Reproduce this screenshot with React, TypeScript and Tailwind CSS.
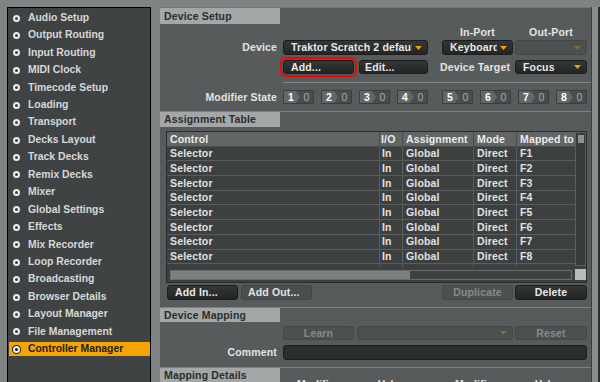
import React from "react";

const sideItems = [
  "Audio Setup",
  "Output Routing",
  "Input Routing",
  "MIDI Clock",
  "Timecode Setup",
  "Loading",
  "Transport",
  "Decks Layout",
  "Track Decks",
  "Remix Decks",
  "Mixer",
  "Global Settings",
  "Effects",
  "Mix Recorder",
  "Loop Recorder",
  "Broadcasting",
  "Browser Details",
  "Layout Manager",
  "File Management",
  "Controller Manager",
];

const rows = ["F1", "F2", "F3", "F4", "F5", "F6", "F7", "F8", "F9"];

function Arrow({ dim }: { dim?: boolean }) {
  return (
    <svg width="7" height="4" viewBox="0 0 7 4" className="shrink-0">
      <polygon points="0,0 7,0 3.5,4" fill={dim ? "#8a6a38" : "#f59e00"} />
    </svg>
  );
}

function Drop({ text, className, disabled }: { text?: string; className: string; disabled?: boolean }) {
  return (
    <div
      className={`${className} h-full flex items-center rounded-[3px] border pl-[7px] pr-[5px] ${
        disabled
          ? "border-[#444747] bg-[#4d5050]"
          : "border-[#1b1c1c] bg-linear-to-b from-[#353636] to-[#242525] text-[#e8e8e8]"
      }`}
    >
      <span className="flex-1 min-w-0 mr-[3px] overflow-hidden whitespace-nowrap">{text}</span>
      <Arrow dim={disabled} />
    </div>
  );
}

function Btn({
  text,
  className,
  kind,
}: {
  text: string;
  className: string;
  kind: "dark" | "mid" | "off";
}) {
  const k =
    kind === "dark"
      ? "border-[#1b1c1c] bg-linear-to-b from-[#353636] to-[#232424] text-[#e8e8e8]"
      : kind === "mid"
      ? "border-[#424545] bg-[#4b4e4e] text-[#e2e2e2]"
      : "border-[#454848] bg-[#4d5050] text-[#868a8a] justify-center";
  return (
    <div className={`${className} h-full flex items-center whitespace-nowrap rounded-[3px] border ${k}`}>
      {text}
    </div>
  );
}

function Header({ text, className }: { text: string; className: string }) {
  return (
    <div className={`${className} w-[120px] bg-[#a3a7a7] text-[#2b2d2d] pl-[4px] flex items-center whitespace-nowrap`}>
      {text}
    </div>
  );
}

function Mod({ n }: { n: number }) {
  return (
    <div className="w-[31px] h-full flex bg-[#4a4d4d] border border-[#3b3e3e] rounded-[1px] overflow-hidden">
      <div className="w-[12px] bg-[#646767] flex items-center justify-end pr-[2px] text-white">{n}</div>
      <div className="w-0 h-0 border-y-[6px] border-y-transparent border-l-[4px] border-l-[#646767]" />
      <div className="flex-1 flex items-center justify-center text-[#a7aaaa] font-normal">0</div>
    </div>
  );
}

export default function App() {
  return (
    <div className="w-[600px] h-[382px] overflow-hidden bg-[#808383] flex pt-[7px] pl-[7px] font-['Liberation_Sans',Arial,Helvetica,sans-serif] font-bold text-[10.5px] leading-none">
      {/* Sidebar */}
      <div className="w-[144px] h-[400px] shrink-0 bg-[#404343] border border-black pt-[1.3px]">
        {sideItems.map((it) => {
          const active = it === "Controller Manager";
          return (
            <div key={it} className="h-[17.45px] flex items-center">
              <div
                className={`flex items-center h-[14px] w-full ml-[1px] ${
                  active ? "bg-[#f6a400] text-[#1c1c1c]" : "text-[#d6d8d8]"
                }`}
              >
                <span
                  className={`ml-[4px] w-[7px] h-[7px] rounded-full border-2 border-[#ececec] ${
                    active ? "bg-[#222] ring-1 ring-[#222]" : "bg-[#404343]"
                  }`}
                />
                <span className="ml-[8px] text-[10.4px] whitespace-nowrap">{it}</span>
              </div>
            </div>
          );
        })}
      </div>

      <div className="w-[9px] shrink-0" />

      {/* Main panel */}
      <div className="w-[432px] h-[400px] shrink-0 bg-[#585b5b] flex flex-col border-r border-[#3c3e3e] tracking-[0.15px]">
        {/* Device Setup */}
        <div className="border-t border-[#737676]">
          <Header text="Device Setup" className="h-[16px]" />
          <div className="flex h-[16px] items-center text-[#e4e4e4]">
            <div className="w-[282px]" />
            <div className="w-[71px] text-center">In-Port</div>
            <div className="w-[72px] ml-[2px] text-center">Out-Port</div>
          </div>
          <div className="flex h-[15px] items-center">
            <div className="w-[117px] text-right text-[#e4e4e4]">Device</div>
            <div className="ml-[6px] h-full flex">
              <Drop text="Traktor Scratch 2 default" className="w-[145px]" />
            </div>
            <div className="ml-[14px] h-full flex">
              <Drop text="Keyboard" className="w-[71px]" />
            </div>
            <div className="ml-[2px] h-full flex">
              <Drop className="w-[72px]" disabled />
            </div>
          </div>
          <div className="flex h-[14px] mt-[5px] items-center">
            <div className="w-[117px]" />
            <div className="ml-[6px] h-full flex rounded-[3px] outline-2 outline-offset-1 outline-[#ff0000]">
              <Btn text="Add..." className="w-[71px] pl-[7px]" kind="dark" />
            </div>
            <div className="ml-[5px] h-full flex">
              <Btn text="Edit..." className="w-[69px] pl-[5px]" kind="dark" />
            </div>
            <div className="ml-[12px] w-[73px] text-right pr-[3px] text-[#e4e4e4] whitespace-nowrap">Device Target</div>
            <div className="ml-[2px] h-full flex">
              <Drop text="Focus" className="w-[72px]" />
            </div>
          </div>
          <div className="mt-[8px] ml-[123px] h-px bg-[#848787]" />
          <div className="flex h-[14px] mt-[7px] items-center">
            <div className="w-[117px] text-right text-[#e4e4e4] whitespace-nowrap">Modifier State</div>
            <div className="ml-[6px] h-full flex gap-[7px]">
              <Mod n={1} />
              <Mod n={2} />
              <Mod n={3} />
              <Mod n={4} />
            </div>
            <div className="ml-[14px] h-full flex gap-[7px]">
              <Mod n={5} />
              <Mod n={6} />
              <Mod n={7} />
              <Mod n={8} />
            </div>
          </div>
        </div>

        {/* Assignment Table */}
        <div className="mt-[7px] border-t border-[#7e8181]">
          <Header text="Assignment Table" className="h-[15px]" />
          <div className="mt-[4px] ml-[6px] w-[421px] h-[152px] border border-[#2a2c2c] bg-[#3d4040] flex flex-col">
            <div className="flex h-[135px]">
              <div className="w-[408px] h-full overflow-hidden flex flex-col">
                <div className="flex h-[14.7px] shrink-0 bg-[#626565] text-[#ececec] border-b border-[#4a4d4d]">
                  <div className="w-[213px] pl-[3px] flex items-center border-r border-[#4a4d4d]">Control</div>
                  <div className="w-[23px] pl-[1px] flex items-center border-r border-[#4a4d4d]">I/O</div>
                  <div className="w-[71px] pl-[3px] flex items-center border-r border-[#4a4d4d]">Assignment</div>
                  <div className="w-[43px] pl-[3px] flex items-center border-r border-[#4a4d4d]">Mode</div>
                  <div className="w-[58px] pl-[3px] flex items-center whitespace-nowrap overflow-hidden">Mapped to</div>
                </div>
                {rows.map((f) => (
                  <div key={f} className="flex h-[14.7px] shrink-0 text-[#e2e2e2] border-b border-[#5a5d5d]">
                    <div className="w-[213px] pl-[3px] flex items-center border-r border-[#5a5d5d]">Selector</div>
                    <div className="w-[23px] pl-[2px] flex items-center border-r border-[#5a5d5d]">In</div>
                    <div className="w-[71px] pl-[3px] flex items-center border-r border-[#5a5d5d]">Global</div>
                    <div className="w-[43px] pl-[3px] flex items-center border-r border-[#5a5d5d]">Direct</div>
                    <div className="w-[58px] pl-[3px] flex items-center">{f}</div>
                  </div>
                ))}
              </div>
              <div className="w-[11px] h-[134px] border border-[#5c5f5f] bg-[#393c3c] pt-[2px] pl-[2px]">
                <div className="w-[6px] h-[8px] bg-[#8e9191]" />
              </div>
            </div>
            <div className="flex h-[15px] items-center">
              <div className="ml-[3px] w-[402px] h-[10px] border border-[#6a6d6d] bg-[#3e4141]">
                <div className="w-[239px] h-full bg-[#7d8080]" />
              </div>
              <div className="ml-[3px] w-[11px] h-[11px] bg-[#b9bcbc]" />
            </div>
          </div>
          <div className="flex mt-[2px] h-[15px]">
            <div className="ml-[7px] h-full flex">
              <Btn text="Add In..." className="w-[71px] pl-[7px]" kind="dark" />
            </div>
            <div className="ml-[3px] h-full flex">
              <Btn text="Add Out..." className="w-[71px] pl-[6px]" kind="mid" />
            </div>
            <div className="ml-[130px] h-full flex">
              <Btn text="Duplicate" className="w-[71px]" kind="off" />
            </div>
            <div className="ml-[2px] h-full flex">
              <Btn text="Delete" className="w-[72px] justify-center" kind="dark" />
            </div>
          </div>
        </div>

        {/* Device Mapping */}
        <div className="mt-[7px] border-t border-[#7e8181]">
          <Header text="Device Mapping" className="h-[14px]" />
          <div className="flex mt-[4px] h-[14px]">
            <div className="ml-[123px] h-full flex">
              <Btn text="Learn" className="w-[71px]" kind="off" />
            </div>
            <div className="ml-[3px] h-full flex">
              <Drop className="w-[156px]" disabled />
            </div>
            <div className="ml-[2px] h-full flex">
              <Btn text="Reset" className="w-[72px]" kind="off" />
            </div>
          </div>
          <div className="flex mt-[5px] h-[15px] items-center">
            <div className="w-[117px] text-right text-[#e4e4e4]">Comment</div>
            <div className="ml-[6px] w-[304px] h-full rounded-[3px] border border-[#1d1e1e] bg-[#2c2d2d]" />
          </div>
        </div>

        {/* Mapping Details */}
        <div className="mt-[7px] border-t border-[#7e8181]">
          <Header text="Mapping Details" className="h-[15px]" />
          <div className="flex -mt-[4px] text-[#e2e2e2]">
            <div className="w-[137px]" />
            <div className="w-[81px]">Modifier</div>
            <div className="w-[77px]">Value</div>
            <div className="w-[80px]">Modifier</div>
            <div>Value</div>
          </div>
        </div>
      </div>

      <div className="w-[6px] h-[400px] shrink-0 bg-[#8b8e8e]" />
      <div className="w-[2px] h-[400px] shrink-0 bg-[#2e3030]" />
    </div>
  );
}
